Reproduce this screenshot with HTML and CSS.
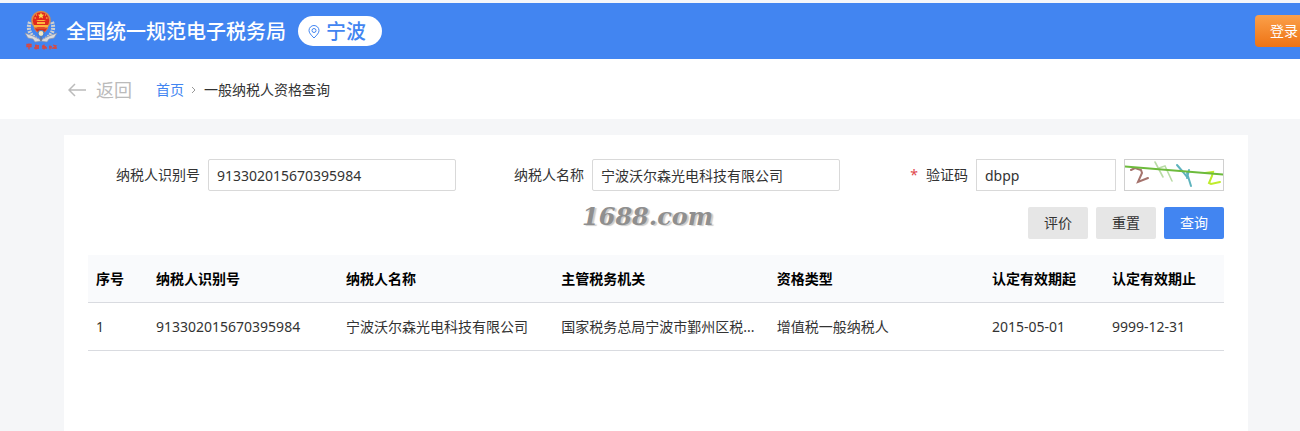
FILE: index.html
```html
<!DOCTYPE html>
<html lang="zh-CN">
<head>
<meta charset="utf-8">
<meta name="viewport" content="width=device-width, initial-scale=1">
<title>一般纳税人资格查询</title>
<link rel="stylesheet" href="styles.css">
</head>
<body>
<header class="topbar">
  <svg class="emblem" viewBox="0 0 34 44" aria-hidden="true">
    <path d="M6 13C3 20 6 27 14 31M28 13C31 20 28 27 20 31" fill="none" stroke="#cfd0cf" stroke-width="4" stroke-dasharray="2 1"/>
    <path d="M1 24l8 3 8 4 8-4 8-3-3 5-5 1-2 3-6-1-6 1-2-3-5-1z" fill="#d9dade" stroke="#8b94a8" stroke-width=".7"/>
    <circle cx="17" cy="11.500" r="9" fill="#e0281d" stroke="#d98a4a" stroke-width="1.600"/>
    <path d="M17 3.500l1 2 2.200.2-1.700 1.500.5 2.200-2-1.200-2 1.200.5-2.200-1.700-1.500 2.200-.2z" fill="#ffd84a"/>
    <path d="M10.500 9h1.500M22 9h1.500M12 6h1M21 6h1" stroke="#ffd84a" stroke-width="1.200"/>
    <path d="M12 12l2-1h6l2 1zM13 13h8v2h-8zM10 16h14v2H10z" fill="#ffb23c"/>
    <path d="M10 19h14l-3 4h-8z" fill="#d6301f" stroke="#e9843f" stroke-width=".8"/>
    <circle cx="17" cy="24.500" r="3" fill="#f4e6c0" stroke="#4c7fc4" stroke-width="1.200"/>
    <path d="M17 28v4" stroke="#6e7687" stroke-width="1.500"/>
    <g fill="none" stroke="#d9483f" stroke-width="1.300">
      <path d="M3 37.500h4v-2H3zM5 34.500v6M11 37h4M10 39h5M12 35.500v5M14 36v4M18 37l4 1M18 39h5M20 35.500v5M26 36.500v4M25 38h3M29 36l3 1-3 2h4M31 37v3"/>
    </g>
  </svg>
  <h1 class="site-name">全国统一规范电子税务局</h1>
  <button class="region" type="button">
    <svg class="pin" viewBox="0 0 12 14" aria-hidden="true"><path d="M6 13C3 10 1 7.800 1 5.500a5 5 0 0 1 10 0C11 7.800 9 10 6 13z"/><circle cx="6" cy="5.500" r="2"/></svg>
    宁波
  </button>
  <button class="login" type="button">登录</button>
</header>

<nav class="crumbs" aria-label="面包屑">
  <a class="back" href="#">
    <svg class="back-arrow" viewBox="0 0 18 14" aria-hidden="true"><path d="M18 7H1M7 1L1 7l6 6"/></svg>
    返回
  </a>
  <a class="home" href="#">首页</a>
  <svg class="chevron" viewBox="0 0 5 8" aria-hidden="true"><path d="M1 1l3 3-3 3"/></svg>
  <span>一般纳税人资格查询</span>
</nav>

<main class="card">
  <form class="search">
    <div class="field">
      <label for="taxId">纳税人识别号</label>
      <input id="taxId" type="text" value="913302015670395984">
    </div>
    <div class="field">
      <label for="taxName">纳税人名称</label>
      <input id="taxName" type="text" value="宁波沃尔森光电科技有限公司">
    </div>
    <div class="field">
      <label for="code"><span class="required">*</span>验证码</label>
      <input id="code" class="square" type="text" value="dbpp">
      <svg class="captcha" viewBox="0 0 98 30" role="img" aria-label="验证码图片">
        <g fill="none" stroke-linecap="round">
          <path d="M6 10l4-2 6 2 1 3-4 9 10-4" stroke="#a5736d" stroke-width="2"/>
          <path d="M30 2l8 15M34 8l6-2 7 15" stroke="#b9dca6" stroke-width="1.600"/>
          <path d="M52 5l6 7 4 5M64 10l-2 8M62 13l4 13" stroke="#5eb3bd" stroke-width="2"/>
          <path d="M80 13l8-1-1 4-3 7 2 1 9-2" stroke="#bfec2b" stroke-width="2"/>
          <path d="M0 6.500l98 8" stroke="#6dbb3c" stroke-width="2"/>
        </g>
      </svg>
    </div>
    <div class="actions">
      <button class="btn" type="button">评价</button>
      <button class="btn" type="reset">重置</button>
      <button class="btn primary" type="button">查询</button>
    </div>
  </form>
  <span class="watermark">1688.com</span>

  <table class="results">
    <colgroup>
      <col class="col-no"><col class="col-id"><col><col><col><col class="col-date"><col class="col-date">
    </colgroup>
    <thead>
      <tr><th>序号</th><th>纳税人识别号</th><th>纳税人名称</th><th>主管税务机关</th><th>资格类型</th><th>认定有效期起</th><th>认定有效期止</th></tr>
    </thead>
    <tbody>
      <tr><td>1</td><td>913302015670395984</td><td>宁波沃尔森光电科技有限公司</td><td>国家税务总局宁波市鄞州区税...</td><td>增值税一般纳税人</td><td>2015-05-01</td><td>9999-12-31</td></tr>
    </tbody>
  </table>
</main>
</body>
</html>
```
FILE: styles.css
```css
* {
  box-sizing: border-box;
}

body {
  display: flex;
  flex-direction: column;
  min-height: 100vh;
  margin: 0;
  border-top: 3px solid #f4f6fa;
  background: #f5f6f8;
  color: #333;
  font: 14px/20px "Noto Sans", "Noto Sans CJK SC", sans-serif;
}

button,
input {
  font: inherit;
  color: inherit;
}

a {
  text-decoration: none;
}

.topbar {
  display: flex;
  align-items: center;
  height: 56px;
  padding-left: 24px;
  background: #4285f1;
  color: #fff;
}

.emblem {
  width: 34px;
  height: 44px;
}

.site-name {
  margin: 0 12px 0 8px;
  padding-top: 2px;
  font-size: 20px;
  font-weight: 500;
  line-height: 30px;
  white-space: nowrap;
}

.region {
  display: flex;
  align-items: center;
  gap: 6px;
  height: 30px;
  padding: 2px 16px 0 10px;
  border: 0;
  border-radius: 15px;
  background: #fff;
  color: #4285f1;
  font-size: 20px;
  font-weight: 500;
  line-height: 28px;
  white-space: nowrap;
}

.pin {
  width: 12px;
  height: 14px;
  fill: none;
  stroke: #4285f1;
}

.login {
  width: 45px;
  height: 32px;
  margin-left: auto;
  padding: 0 0 0 15px;
  border: 0;
  border-radius: 4px 0 0 4px;
  background: linear-gradient(#fba04a, #ee7314);
  color: #fff;
  text-align: left;
  white-space: nowrap;
}

.crumbs {
  display: flex;
  align-items: center;
  height: 60px;
  padding: 2px 68px 0;
  background: #fff;
}

.back {
  display: flex;
  align-items: center;
  gap: 10px;
  margin-right: 24px;
  color: #bbb;
  font-size: 18px;
}

.back-arrow {
  width: 18px;
  height: 14px;
  fill: none;
  stroke: #bbb;
  stroke-width: 1.5;
}

.home {
  color: #4285f1;
}

.chevron {
  width: 5px;
  height: 8px;
  margin: 0 8px 0 7px;
  fill: none;
  stroke: #999;
}

.card {
  position: relative;
  flex: 1;
  margin: 16px 52px 0 64px;
  padding: 24px;
  background: #fff;
}

.search {
  display: grid;
  grid-template-columns: repeat(3, minmax(0, 1fr));
  gap: 16px;
}

.field {
  display: flex;
  align-items: center;
  gap: 8px;
}

.field label {
  flex: 0 0 112px;
  text-align: right;
}

.required {
  margin-right: 8px;
  color: #e0474c;
}

.field input {
  flex: 1;
  width: 0;
  min-width: 0;
  height: 32px;
  padding: 0 8px;
  border: 1px solid #d9d9d9;
  border-radius: 2px;
  background: #fff;
}

.field .square {
  border-radius: 0;
}

.captcha {
  flex: 0 0 100px;
  width: 100px;
  height: 32px;
  border: 1px solid #d0d0d0;
}

.field:nth-child(3) label {
  flex: 1;
}

.field:nth-child(3) input {
  flex: 0 0 140px;
}

.actions {
  display: flex;
  grid-column: 1 / -1;
  justify-content: flex-end;
  gap: 8px;
}

.btn {
  width: 60px;
  height: 32px;
  padding: 0;
  border: 0;
  border-radius: 2px;
  background: #e6e6e6;
}

.primary {
  background: #4285f1;
  color: #fff;
}

.watermark {
  position: absolute;
  top: 66px;
  left: 518px;
  color: #8f8f8f;
  font: italic 700 24px/32px "DejaVu Serif", serif;
  text-shadow: 2px 1px 1px #ccc;
  pointer-events: none;
}

.results {
  width: 100%;
  margin-top: 16px;
  border-collapse: separate;
  border-spacing: 0;
  table-layout: fixed;
}

.col-no {
  width: 60px;
}

.col-id {
  width: 190px;
}

.col-date {
  width: 120px;
}

.results th,
.results td {
  height: 48px;
  padding: 0 8px;
  border-bottom: 1px solid #d9dbe0;
  text-align: left;
  white-space: nowrap;
}

.results th {
  background: #f9fafc;
  color: #000;
  font-weight: 700;
}
```
